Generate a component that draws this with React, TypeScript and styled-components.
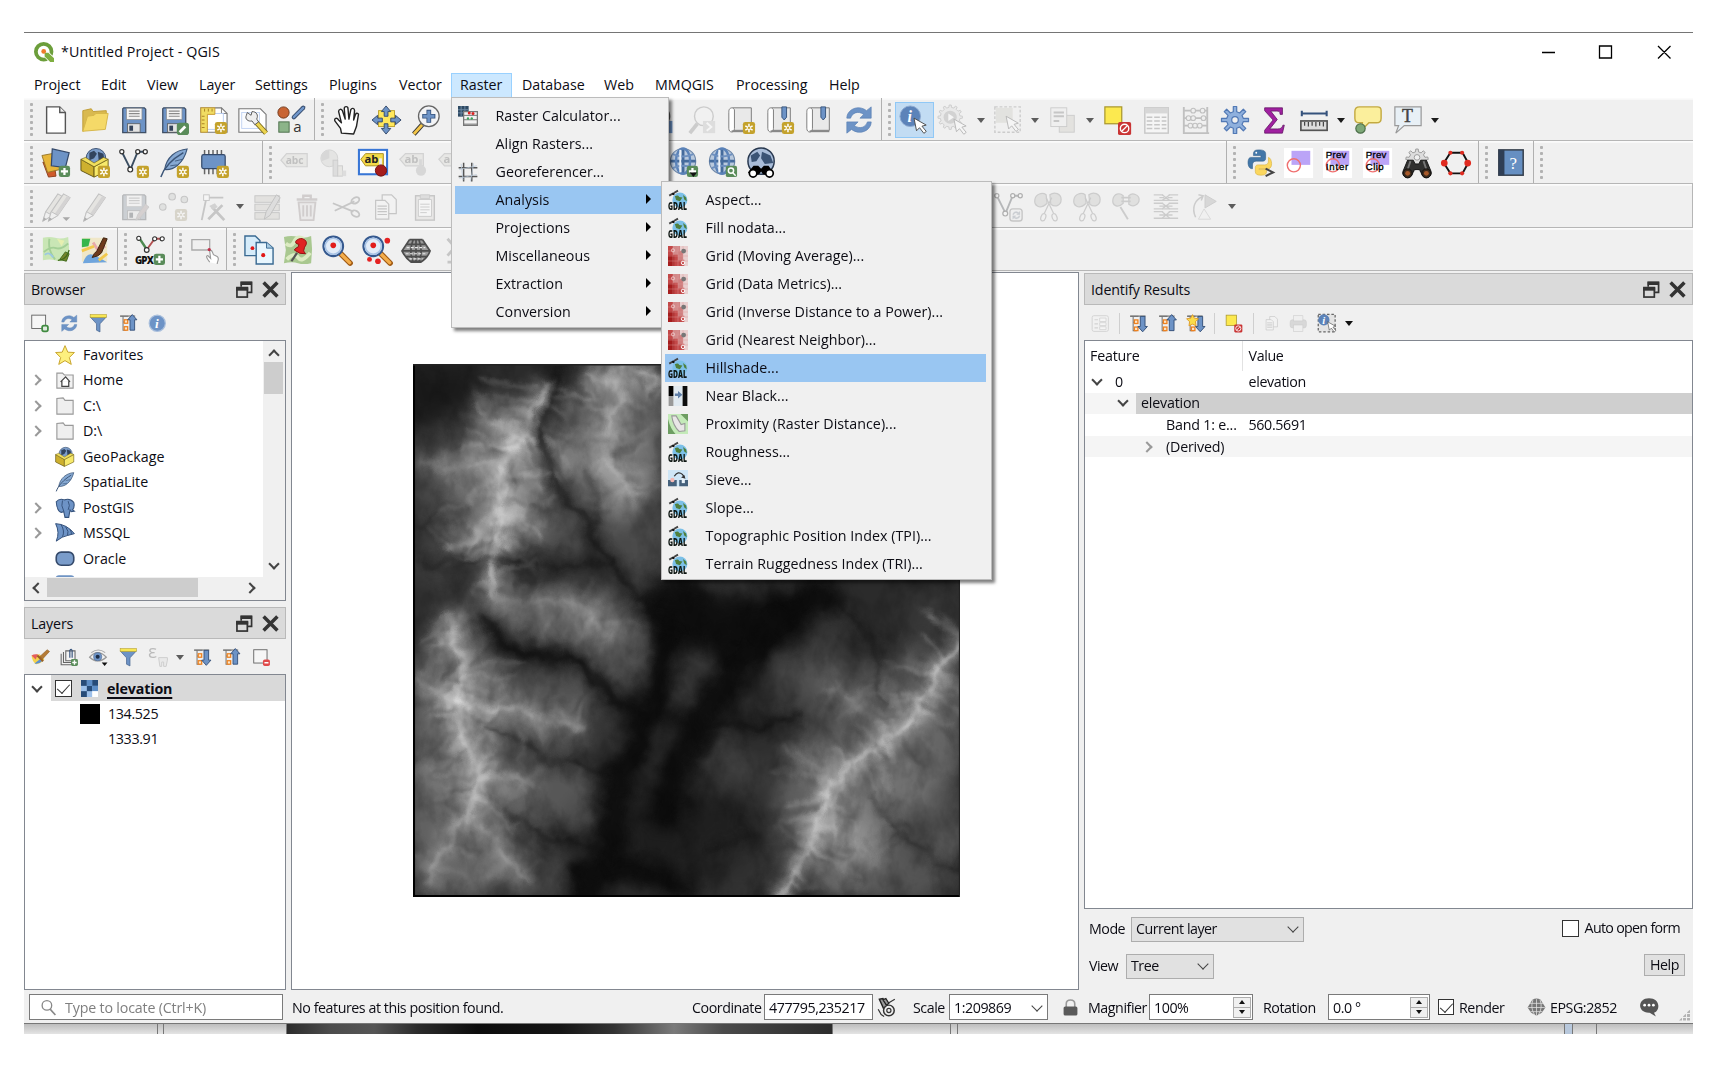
import React from 'react';
import styled, { createGlobalStyle, css } from 'styled-components';

const GlobalStyle = createGlobalStyle`
  * { box-sizing: border-box; }
  body { margin: 0; background: #fff; width: 1730px; height: 1076px; overflow: hidden; }
  #root { font-family: "Open Sans", "Noto Sans", sans-serif; font-size: 14.25px; color: #0c0c14; line-height: 20px; white-space: nowrap; }
`;

/* ---------- icon parts ---------- */

const BLUE = '#6d93c6';
const GOLD = '#c4a22c';
const GREEN = '#5a8c5a';

const StarBadge = ({ x = 18, y = 18 }) => (
  <g transform={`translate(${x} ${y})`}>
    <rect width="13" height="13" rx="2.5" fill={GOLD} />
    <path d="M6.5 2v9M2.6 4.2l7.8 4.6M10.4 4.2L2.6 8.8" stroke="#fff" strokeWidth="1.6" />
    <circle cx="6.5" cy="6.5" r="1.2" fill={GOLD} />
  </g>
);

const PlusBadge = ({ x = 19, y = 19 }) => (
  <g transform={`translate(${x} ${y})`}>
    <rect width="12" height="12" rx="2.5" fill={GREEN} />
    <path d="M6 2.2v7.6M2.2 6h7.6" stroke="#fff" strokeWidth="2.4" />
  </g>
);

const Floppy = () => (
  <>
    <path d="M5 3h22l1.5 1.5V29.500H4V4z" fill={BLUE} stroke="#3f4f66" strokeWidth="1.4" />
    <rect x="8" y="3.500" width="16.500" height="12" fill="#f4f4f4" stroke="#888" strokeWidth=".7" />
    <path d="M10.500 6.500h11.500M10.500 9.200h11.500M10.500 12h11.500" stroke="#8a8a8a" strokeWidth="1.300" />
    <rect x="9" y="20" width="13.500" height="9" fill="#e4e4e4" stroke="#555" strokeWidth=".8" />
    <rect x="11" y="22" width="4" height="5.500" fill="#34435a" />
  </>
);

const Cursor = ({ x = 17, y = 14 }) => (
  <path
    transform={`translate(${x} ${y})`}
    d="M0 0l2.700 13.500 3.200-3.300 4.600 6 2.600-2-4.600-5.600 4.500-1.200z"
    fill="#fff"
    stroke="#4a4a4a"
    strokeWidth="1"
  />
);

const Globe = () => (
  <>
    <circle cx="15" cy="14" r="13.500" fill="#b9c9dd" stroke="#6f88a8" strokeWidth="1.200" />
    <path d="M15 .5v27M1.500 14h27" stroke="#456b9c" strokeWidth="3" />
    <ellipse cx="15" cy="14" rx="7.500" ry="13.500" fill="none" stroke="#5a82b8" strokeWidth="2.600" />
    <path d="M4 6.500q11 5 22 0M4 21.500q11-5 22 0" fill="none" stroke="#6e90bf" strokeWidth="2" />
    <path d="M12 2v24" stroke="#eef3f9" strokeWidth="2" />
  </>
);

const Feather = () => (
  <>
    <path d="M30 1C18 2 8 10 6 23c9 1 20-6 24-22z" fill="#86a9d3" stroke="#3b5578" strokeWidth="1.200" />
    <path d="M2 31C5 22 14 12 26 5" stroke="#3b5578" strokeWidth="1.600" fill="none" />
    <path d="M12 19l7-1M17 14l8-2" stroke="#3b5578" strokeWidth=".9" fill="none" />
  </>
);

const Box = () => (
  <>
    <circle cx="17" cy="11" r="10.500" fill="#7c9dca" stroke="#374e6f" />
    <path d="M10 5l5-2 3 3-3 5-5 2zM19 4l6 2 1 7-6 1z" fill="#31435e" />
    <path d="M1 12l14 8v11L1 24z" fill="#ceb02e" stroke="#5e5212" />
    <path d="M15 20l15-8v12l-15 7z" fill="#f7e96b" stroke="#6e5f14" />
    <path d="M1 12l5-2 9 6 10-6 5 2-15 8z" fill="#f1df5d" stroke="#6e5f14" strokeWidth=".7" />
  </>
);

const VLine = () => (
  <>
    <path d="M3 4l9 18M13 21l7-17h8" fill="none" stroke="#3a4d61" strokeWidth="2" />
    <g fill="#fff" stroke="#333" strokeWidth="1.300">
      <circle cx="3" cy="4" r="2.200" /><circle cx="12" cy="23" r="2.600" /><circle cx="20" cy="4" r="2.200" /><circle cx="28" cy="4" r="2.200" />
    </g>
  </>
);

const Refresh = () => (
  <g fill={BLUE} stroke="#587fb2" strokeWidth=".7">
    <path d="M3 14C3 5 15-1 24 6l5-4v12H17l4-4c-6-4-12-2-14 4z" />
    <path d="M29 18c0 9-12 15-21 8l-5 4V18h12l-4 4c6 4 12 2 14-4z" />
  </g>
);

const TreeLines = () => (
  <>
    <path d="M2 4h14M7 4v24h6M7 14h6" stroke="#777" strokeWidth="1.800" fill="none" />
    <path d="M2 3.500h26" stroke="#777" strokeWidth="2" />
    <g fill="#fbe6c9" stroke="#ee8220" strokeWidth="2.200">
      <rect x="9" y="10" width="6" height="6" /><rect x="9" y="22" width="6" height="6" />
    </g>
  </>
);

const Pencil = ({ dx = 0 }) => (
  <g transform={`translate(${dx} 0)`}>
    <path d="M2 31l3-10L18 2l7 4-13 19z" fill="#d7cfae" stroke="#666" strokeWidth="1.100" />
    <path d="M5 21l7 4L25 6l-3-2-13 19z" fill="#a99" />
    <path d="M2 31l3-10 7 4z" fill="#eee" stroke="#666" strokeWidth="1" />
    <path d="M2 31l1-4 3 2z" fill="#333" />
  </g>
);

const Magnifier = () => (
  <>
    <path d="M20 20l10 10" stroke="#a05a14" strokeWidth="6" strokeLinecap="round" />
    <path d="M20 20l9.500 9.500" stroke="#f4ad4b" strokeWidth="3.600" strokeLinecap="round" />
    <circle cx="12" cy="12" r="10.500" fill="#e2ecf8" stroke="#35598f" strokeWidth="2.200" />
    <circle cx="12" cy="12" r="8.500" fill="none" stroke="#a8c3e6" strokeWidth="1.600" />
    <circle cx="12" cy="11" r="3" fill="#e11d1d" />
  </>
);

const Binoculars = () => (
  <>
    <path d="M6 13h6l2 4h4l2-4h6l5 12a5 5 0 0 1-10 3l-2-5h-6l-2 5a5 5 0 0 1-10-3z" fill="#30302f" stroke="#111" />
    <path d="M9 14l-3 9M23 14l3 9" stroke="#777" strokeWidth="2" />
    <circle cx="6" cy="27" r="4.800" fill="#3b2b1e" stroke="#111" /><circle cx="26" cy="27" r="4.800" fill="#3b2b1e" stroke="#111" />
    <circle cx="6" cy="27" r="2.600" fill="#a7592a" /><circle cx="26" cy="27" r="2.600" fill="#a7592a" />
  </>
);

const gearPath = (n: number, ro: number, ri: number) => {
  const pts: string[] = [];
  for (let i = 0; i < n; i++) {
    const step = (Math.PI * 2) / n;
    [[-0.26, ri], [-0.16, ro], [0.16, ro], [0.26, ri]].forEach(([f, r]) => {
      const a = i * step + f * step;
      pts.push(`${(16 + r * Math.sin(a)).toFixed(1)} ${(16 - r * Math.cos(a)).toFixed(1)}`);
    });
  }
  return `M${pts.join('L')}z`;
};

const Cutters = () => (
  <g stroke="#888" strokeWidth="1.300">
    <path d="M15 12C7 20 1 14 2 8S10 0 14 3z" fill="#bfc5bb" /><path d="M18 3c5-4 12-1 12 5s-6 9-11 5z" fill="#bfc5bb" />
    <path d="M14 6l8 17M20 6l-8 17" fill="none" />
    <ellipse cx="11" cy="27" rx="2.500" ry="4" fill="none" transform="rotate(20 11 27)" /><ellipse cx="23" cy="27" rx="2.500" ry="4" fill="none" transform="rotate(-20 23 27)" />
  </g>
);

const Squares = () => (
  <>
    <rect x="0" y="0" width="31" height="32" fill="#fff" />
    <rect x="8" y="3" width="20" height="15" fill="#bba4f7" />
    <circle cx="10.500" cy="18.500" r="7" fill="none" stroke="#f07070" strokeWidth="1.500" />
  </>
);

const PreviewText = ({ second, w }: { second: string; w: number }) => (
  <g fontFamily="Liberation Sans" fontSize="10.300" fill="#000" stroke="#000" strokeWidth=".35">
    <text x="3" y="10.500" textLength="22">Prev</text>
    <text x="3" y="23.500" textLength={w}>{second}</text>
  </g>
);

const ICONS: Record<string, React.ReactNode> = {
  newFile: <><path d="M6 2h14l6 6v22H6z" fill="#fff" stroke="#555" strokeWidth="1.500" /><path d="M20 2v6h6" fill="#eee" stroke="#555" strokeWidth="1.500" /></>,
  folder: <><path d="M3 28V6l9-2 2 3 14-1v6z" fill="#d9b94f" stroke="#c09c33" /><path d="M3 28L8 12l7-1 2-2h13l-3 17z" fill="#f5d968" stroke="#d5b548" /></>,
  save: <Floppy />,
  saveAs: <><Floppy /><rect x="19" y="19" width="13" height="13" rx="3" fill={GREEN} /><path d="M22 29l6-6" stroke="#fff" strokeWidth="3" /></>,
  newLayout: <><path d="M3 3h22l6 6v20H3z" fill="#fff" stroke="#777" strokeWidth="1.200" /><path d="M25 3v6h6" fill="none" stroke="#777" /><rect x="9" y="9" width="18" height="17" fill="none" stroke="#b8cdf2" /><path d="M3 3h15v7h-8v19H3z" fill="#f0dc63" stroke="#c99b33" /><path d="M7 4v3M11 4v3M15 4v3M4 12h3M4 16h3M4 20h3M4 24h3" stroke="#a87d22" /><StarBadge /></>,
  layoutMgr: <><path d="M2 4h23l6 6v19H2z" fill="#fff" stroke="#777" strokeWidth="1.200" /><rect x="5" y="8" width="19" height="17" fill="#fafcff" stroke="#c2d4f3" /><path d="M20 18l11 12" stroke="#7b6a1d" strokeWidth="5.500" /><path d="M21 19l10 11" stroke="#ecd44f" strokeWidth="3.500" /><path d="M11 8l4 3 1-4c5 0 7 4 5 8l2 3-4 3-3-4c-4 1-8-2-6-6z" fill="#eee" stroke="#555" /></>,
  style: <><circle cx="8" cy="8" r="6" fill="#c86433" stroke="#6e3518" /><path d="M19 13L29 3" stroke="#34496a" strokeWidth="4.500" strokeLinecap="round" /><path d="M19 13L29 3" stroke="#7197ca" strokeWidth="2.500" strokeLinecap="round" /><rect x="3" y="18" width="11" height="11" fill="#8cb489" stroke="#4a6d48" /><text x="18.500" y="29" fontSize="16" fill="#333">a</text></>,
  hand: <path d="M9 30l-1-5-6-8c-1-3 2-4 4-1l3 3-3-12c0-3 3-3 4-1l3 9-1-11c0-3 4-3 4 0l1 11 2-10c1-2 4-2 4 1l-1 10 2-6c1-2 4-1 3 1l-2 12-3 8z" fill="#fff" stroke="#222" strokeWidth="1.500" strokeLinejoin="round" />,
  pan: <><rect x="7" y="6" width="17" height="17" fill="#ffe75c" stroke="#bba02a" /><g fill={BLUE} stroke="#33496b"><path d="M15 1l5 6h-3v5h-4V7h-3zM15 31l5-6h-3v-5h-4v5h-3zM0 16l6-5v3h5v4H6v3zM31 16l-6-5v3h-5v4h5v3z" /></g></>,
  zoomIn: <><path d="M12 21L3 31" stroke="#333" strokeWidth="5" /><path d="M12 21L3 31" stroke="#f4c648" strokeWidth="3" /><circle cx="19" cy="12" r="11" fill="#f3f4f6" stroke="#666" strokeWidth="1.400" /><path d="M19 5v14M12 12h14" stroke="#35527c" strokeWidth="5" /><path d="M19 6v12M13 12h12" stroke={BLUE} strokeWidth="3.200" /></>,
  zoomLast: <><circle cx="12" cy="12" r="11" fill="#eee" stroke="#555" strokeWidth="1.600" /><rect x="13" y="17" width="13" height="13" fill={BLUE} /><path d="M22 20l-5 3.500 5 4" stroke="#fff" strokeWidth="2" fill="none" /></>,
  zoomNext: <><path d="M11 20L3 30" stroke="#888" strokeWidth="4" /><circle cx="18" cy="12" r="10" fill="#f4f4f4" stroke="#888" strokeWidth="1.500" /><rect x="17" y="17" width="13" height="13" fill="#bbb" /><path d="M21 19l5 4.500-5 4" stroke="#fff" strokeWidth="2" fill="none" /></>,
  mapView: <><path d="M7 3h20v24H7z" fill="#e9e9e9" stroke="#777" /><path d="M7 3c-4 0-4 3-4 5v17c0 5 6 5 6 0V5z" fill="#fff" stroke="#777" /><path d="M6 28h21" stroke="#888" strokeWidth="2" /><StarBadge x={18} y={18} /></>,
  bookmarkNew: <><path d="M7 3h20v24H7z" fill="#e9e9e9" stroke="#777" /><path d="M7 3c-4 0-4 3-4 5v17c0 5 6 5 6 0V5z" fill="#fff" stroke="#777" /><path d="M6 28h21" stroke="#888" strokeWidth="2" /><path d="M18 2h5v11l-2.500 3-2.500-3z" fill={BLUE} stroke="#35527c" /><StarBadge x={18} y={18} /></>,
  bookmarks: <><path d="M7 3h20v24H7z" fill="#e9e9e9" stroke="#777" /><path d="M7 3c-4 0-4 3-4 5v17c0 5 6 5 6 0V5z" fill="#fff" stroke="#777" /><path d="M6 28h21" stroke="#888" strokeWidth="2" /><path d="M18 2h5v11l-2.500 3-2.500-3z" fill={BLUE} stroke="#35527c" /></>,
  refresh: <Refresh />,
  identify: <><circle cx="12" cy="12" r="11" fill="#5c83b9" stroke="#8fabd0" /><text x="9" y="18" fontSize="17" fontStyle="italic" fontWeight="700" fontFamily="Liberation Serif" fill="#fff">i</text><Cursor x={16} y={14} /></>,
  action: <><path d={gearPath(12, 13, 10.5)} transform="translate(-3 -3)" fill="#ddd" stroke="#888" /><circle cx="13" cy="13" r="7" fill="#999" /><path d="M11 9l6 4-6 4z" fill="#fff" /><Cursor x={17} y={15} /></>,
  select: <><rect x="2" y="2" width="27" height="27" fill="none" stroke="#888" strokeWidth="1.500" strokeDasharray="3 2" /><rect x="3" y="3" width="18" height="16" fill="#cfc9a4" /><Cursor x={14} y={12} /></>,
  form: <><rect x="12" y="11" width="16" height="18" fill="#cfcba6" stroke="#888" /><rect x="3" y="3" width="17" height="20" fill="#eee" stroke="#888" /><path d="M6 8h11M6 12h11M6 17h6" stroke="#777" strokeWidth="2" /></>,
  deselect: <><rect x="2" y="2" width="18" height="18" fill="#fce94f" stroke="#a9972c" strokeWidth="1.300" /><rect x="16" y="18" width="14" height="14" rx="2" fill="#c93434" /><circle cx="23" cy="25" r="4.500" fill="none" stroke="#fff" strokeWidth="1.500" /><path d="M20 28l6-6" stroke="#fff" strokeWidth="1.500" /></>,
  table: <><rect x="3" y="3" width="25" height="27" fill="#fff" stroke="#777" strokeWidth="1.500" /><rect x="3" y="3" width="25" height="6" fill="#aaa" /><path d="M5 13h6M13 13h6M21 13h5M5 17h6M13 17h6M21 17h5M5 21h6M13 21h6M21 21h5M5 25h6M13 25h6M21 25h5" stroke="#777" strokeWidth="1.500" /></>,
  abacus: <><path d="M3 2v27M28 2v27M2 30h28M4 6h24M4 14h24M4 22h24" stroke="#666" strokeWidth="2" /><g fill="#eee" stroke="#666" strokeWidth="1.200">{[[13, 6], [23, 6], [8, 14], [13, 14], [24, 14], [10, 22], [15, 22], [20, 22]].map(([x, y]) => <circle key={`${x}-${y}`} cx={x} cy={y} r="2.500" />)}</g></>,
  gear: <><path d={gearPath(8, 14.5, 9)} fill="#8fb0dd" stroke="#5279b5" strokeWidth="1.300" strokeLinejoin="round" /><circle cx="16" cy="16" r="3.500" fill="#f0f0f0" stroke="#5279b5" strokeWidth="1.300" /></>,
  sigma: <path d="M6 3h19v7h-2.500c0-3-1-3.500-4-3.500h-6l7 9-8 10h8c4 0 5-1 6-4h1.500L25 30H6v-3l9-11L6 6z" fill="#a020a0" stroke="#5d1460" strokeWidth=".8" />,
  measure: <><path d="M3 9h27M3 6v6M29.500 6v6" stroke="#35527c" strokeWidth="2.200" /><rect x="2" y="17" width="28" height="10" fill="#ddd" stroke="#555" strokeWidth="1.800" /><path d="M6 18v4M10 18v5M14 18v4M18 18v5M22 18v4M26 18v5" stroke="#444" strokeWidth="1.300" /></>,
  tip: <><path d="M7 2h19q4 0 4 4v8q0 5-5 5h-8l-8 8 1-8H7q-5 0-5-5V7q0-5 5-5z" fill="#fbef9c" stroke="#c3a940" strokeWidth="1.500" /><circle cx="8" cy="25" r="5" fill="#7ea878" stroke="#4a6d48" strokeWidth="1.200" /></>,
  textNote: <><path d="M2 2h28v20H12l-9 8 3-8H2z" fill="#e8f0f6" stroke="#999" strokeWidth="1.300" /><text x="9.500" y="18" fontSize="19" fontFamily="Liberation Serif" stroke="#444" strokeWidth=".5" fill="#444">T</text></>,
  dataSource: <><path d="M2 15l12 2 2 13-8 1z" fill="#cf5b2b" stroke="#8d3d1b" /><path d="M1 8l16-3 3 18-13 3z" fill="#e7b63a" stroke="#967427" /><path d="M12 1l18 4-4 16-15-2z" fill={BLUE} stroke="#34496a" strokeWidth="1.300" /><PlusBadge x={19} y={19} /></>,
  geopackage: <><Box /><StarBadge x={19} y={19} /></>,
  box: <Box />,
  newShape: <><VLine /><StarBadge x={19} y={19} /></>,
  spatialite: <><Feather /><StarBadge x={19} y={19} /></>,
  feather: <Feather />,
  chip: <><path d="M7 2v26M11.500 2v26M16 2v26M20.500 2v26M25 2v26" stroke="#666" strokeWidth="1.600" /><rect x="4" y="7" width="25" height="15" rx="2" fill={BLUE} stroke="#34496a" strokeWidth="1.300" /><StarBadge x={20} y={19} /></>,
  abc: <><path d="M1 13l6-7h22v14H7z" fill="#dcd7bd" stroke="#999" strokeWidth="1.300" /><text x="6" y="17" fontSize="11" fontWeight="700" fill="#666">abc</text></>,
  diagram: <><circle cx="11" cy="11" r="9" fill="#ccd1bf" stroke="#999" /><path d="M11 11V2a9 9 0 0 0-8 12z" fill="#aaa" /><rect x="15" y="13" width="5" height="17" fill="#bbb" stroke="#888" /><rect x="20" y="19" width="5" height="11" fill="#dcd6b8" stroke="#888" /><rect x="25" y="24" width="4" height="6" fill="#bbb" /></>,
  pinLabelOn: <><rect x="1" y="2" width="30" height="26" fill="#fdfdfd" stroke="#3876d6" strokeWidth="2.200" /><path d="M3 12l5-6h19v13H8z" fill="#f4db48" stroke="#a98c1d" /><text x="7" y="16.500" fontSize="12" fontWeight="700" fill="#222">ab</text><path d="M24 11v10" stroke="#eee" strokeWidth="3" /><circle cx="24.500" cy="24" r="6" fill="#a51c1c" stroke="#6f1010" /></>,
  pinLabel: <><path d="M2 12l6-6h19v13H8z" fill="#dcd7bd" stroke="#999" strokeWidth="1.300" /><text x="7" y="16.500" fontSize="12" fontWeight="700" fill="#666">ab</text><path d="M24 12v10" stroke="#aaa" strokeWidth="3" /><circle cx="24.500" cy="24" r="5.500" fill="#aaa" /></>,
  globePlus: <><Globe /><PlusBadge x={19} y={19} /><path d="M22 26h8l-4 5z" fill="#111" /></>,
  globeSearch: <><Globe /><rect x="19" y="19" width="12" height="12" rx="2" fill={GREEN} /><circle cx="24.500" cy="24" r="2.800" fill="none" stroke="#fff" strokeWidth="1.600" /><path d="M26.500 26.500l3 3" stroke="#fff" strokeWidth="1.600" /></>,
  globeFind: <><circle cx="15" cy="14" r="14" fill="#a9bdd9" stroke="#28384f" strokeWidth="1.600" /><path d="M4 8l7-4 3 4-4 6-5 1zM16 4l9 4 3 8-9 1-4-6z" fill="#3b5475" /><path d="M7 19h5l3 3 3-3h5l5 7-4 4-7-2-2-3-2 3-7 2-5-4z" fill="#000" /><circle cx="6.500" cy="27" r="4" fill="#fff" stroke="#000" strokeWidth="1.800" /><circle cx="24" cy="27" r="4" fill="#fff" stroke="#000" strokeWidth="1.800" /></>,
  python: <><path d="M15 2c-6 0-6 2-6 6h8v2H6c-4 0-4 13 2 12v-4c0-3 2-4 4-4h7c2 0 3-1 3-3V6c0-3-3-4-7-4z" fill="#4377a8" stroke="#2e5d8a" strokeWidth=".6" /><path d="M17 29c6 0 6-2 6-6h-8v-1h10c5 0 4-11 0-12v4c0 3-2 4-4 4h-7c-2 0-3 1-3 3v4c0 3 2 4 6 4z" fill="#fbd75f" stroke="#d4ad38" strokeWidth=".6" /><circle cx="12" cy="5" r="1" fill="#fff" /><path d="M22 22l8 4-8 4" fill="none" stroke="#444" strokeWidth="2.200" /></>,
  shapes: <Squares />,
  prevInter: <><Squares /><PreviewText second="Inter" w={24} /></>,
  prevClip: <><Squares /><PreviewText second="Clip" w={19} /></>,
  binoculars: <><path d={gearPath(9, 12, 9)} transform="translate(0 -3)" fill="#ddd" stroke="#999" /><circle cx="16" cy="10" r="3" fill="#f0f0f0" stroke="#999" /><Binoculars /></>,
  hexagon: <><path d="M3 16l7-11h13l6 11-6 11H10z" fill="none" stroke="#111" strokeWidth="2" /><g fill="#e02b20"><circle cx="3.500" cy="16" r="3.600" /><circle cx="28.500" cy="16" r="3.600" /><circle cx="10" cy="5" r="2.200" /><circle cx="22.500" cy="5" r="2.200" /><circle cx="10" cy="27" r="2.200" /><circle cx="22.500" cy="27" r="2.200" /></g></>,
  helpBook: <><rect x="3" y="2" width="26" height="27" fill="#668fc2" stroke="#37404d" strokeWidth="1.600" /><rect x="3" y="2" width="6" height="27" fill="#2f3e55" /><text x="14.500" y="22" fontSize="18" fontFamily="Liberation Serif" fill="#fff">?</text></>,
  pencils: <><Pencil dx={0} /><Pencil dx={6} /><path d="M23 27h8l-4 4z" fill="#222" /></>,
  pencil: <Pencil dx={2} />,
  saveEdits: <><Floppy /><path d="M18 30l2-6 8-11 4 3-9 11z" fill="#c58a8a" stroke="#888" /></>,
  points: <><g fill="#bfc8bf" stroke="#777" strokeWidth="1.200"><circle cx="4" cy="16" r="3.500" /><circle cx="14" cy="5" r="3.500" /><circle cx="27" cy="8" r="3.500" /></g><StarBadge x={17} y={18} /></>,
  vertex: <><path d="M4 30L9 6h18" fill="none" stroke="#777" strokeWidth="2" /><rect x="6" y="3" width="6" height="6" fill="#fff" stroke="#777" /><path d="M11 29l15-15M15 16l13 14" stroke="#777" strokeWidth="3" /><path d="M12 15l6-3 3 4-5 3z" fill="#999" /></>,
  editTable: <><g fill="#ccc8a8" stroke="#777"><rect x="2" y="4" width="26" height="7" /><rect x="2" y="13" width="26" height="7" /><rect x="2" y="22" width="26" height="7" /></g><path d="M12 29l2-8L25 3l4 3-11 19z" fill="#bbb" stroke="#666" /></>,
  trash: <><path d="M7 11h18l-2 19H9z" fill="#e8dada" stroke="#a88" strokeWidth="2" /><path d="M5 8h22M12 8V4h8v4" fill="none" stroke="#a88" strokeWidth="2.500" /><path d="M12 14v12M16 14v12M20 14v12" stroke="#a88" strokeWidth="2" /></>,
  scissors: <g fill="none" stroke="#777" strokeWidth="2"><path d="M2 12l22 9M4 20l21-10" /><ellipse cx="26" cy="9" rx="4.500" ry="3" transform="rotate(-30 26 9)" /><ellipse cx="26" cy="23" rx="4.500" ry="3" transform="rotate(30 26 23)" /></g>,
  copy: <g fill="#f6f6f6" stroke="#777" strokeWidth="1.300"><path d="M13 3h10l5 5v15H13z" /><path d="M6 9h10l4 4v16H6z" /><path d="M8 15h10M8 18h10M8 21h10M8 24h10" /></g>,
  paste: <><rect x="7" y="4" width="20" height="26" fill="#ddd8cc" stroke="#777" strokeWidth="1.500" /><path d="M10 8h14v18H10z" fill="#fff" stroke="#888" /><path d="M12 3h10v4H12zM12 13h10M12 16h10M12 19h10M12 22h7" fill="#bbb" stroke="#888" /></>,
  vRefresh: <><VLine /><rect x="17" y="18" width="13" height="13" rx="3" fill="#eee" stroke="#777" strokeWidth="1.500" /><g transform="translate(19 20) scale(.3)"><Refresh /></g></>,
  cutters: <Cutters />,
  merge: <g stroke="#888" strokeWidth="1.300"><path d="M13 12C7 18 1 14 2 8S9 0 13 4z" fill="#bfc5bb" /><path d="M19 4c4-4 11-1 11 4s-6 9-11 5z" fill="#bfc5bb" /><path d="M11 6h10M11 10h10M10 16l8 13" fill="none" strokeWidth="2" /></g>,
  align: <g stroke="#888" strokeWidth="1.400" fill="none"><path d="M4 3h10M20 3h10M4 9h26M4 12h10M20 12h10M4 18h26M4 21h10M20 21h10M4 28h26" /><path d="M10 6h5M19 6h5M13 3l4 3-4 3M21 3l-4 3 4 3M10 15h14M10 24.500h14M13 12l4 3-4 3M21 12l-4 3 4 3M13 21l4 3.500-4 3.500M21 21l-4 3.500 4 3.500" /></g>,
  rotate: <><path d="M6 27C1 16 6 8 13 5M9 3l5 1-2 5" fill="none" stroke="#888" strokeWidth="1.600" /><path d="M16 3l12 7-12 7z" fill="#aaa" stroke="#888" /><path d="M9 29l6-11 7 11z" fill="none" stroke="#aaa" /></>,
  osm: <><path d="M2 3q7-2 13 0t14-1l1 12-2 13q-7 2-13 0T2 27L2 16z" fill="#c9e6b5" /><path d="M3 18q8-6 13-4t13-5M9 4q-2 12 6 22" stroke="#a3cf96" strokeWidth="2" fill="none" /><path d="M17 4l8 2-3 6z" fill="#e6efb0" /><path d="M4 21q5-4 9 3" stroke="#9cc8e2" strokeWidth="2" fill="none" /><path d="M20 26l6-8 4 2-3 8z" fill="#76852c" stroke="#3f6a1d" /><path d="M18 27q9 0 12-11" stroke="#3f6a1d" strokeWidth="1.300" fill="none" /></>,
  osmEdit: <><rect x="2" y="3" width="27" height="26" rx="2" fill="#f0e7c8" /><path d="M2 4h9l-2 8-7 1z" fill="#35b54b" /><path d="M3 30q4-12 11-9t15 8z" fill="#6fa5dd" /><path d="M14 8l5 8 8-4" stroke="#e7a9a9" strokeWidth="3" fill="none" /><path d="M2 17l13-5M20 27l9-7" stroke="#f2c84c" strokeWidth="3" /><path d="M13 24q2-5 5-7l7-14 4 1-6 15q-3 4-10 5z" fill="#6e3a1c" stroke="#39200f" /></>,
  gpx: <><path d="M5 4l8 12" stroke="#4d8a50" strokeWidth="2.500" /><path d="M13 15l8-11h8" stroke="#b35050" strokeWidth="2" fill="none" /><g fill="#fff" stroke="#333" strokeWidth="1.200"><circle cx="4" cy="3.500" r="2.200" /><circle cx="12.500" cy="16" r="2.500" /><circle cx="21" cy="4" r="2.200" /><circle cx="29" cy="4" r="2.200" /></g><text x="0" y="30.500" fontSize="10.500" fontWeight="800" fill="#111" textLength="20">GPX</text><PlusBadge x={20} y={20} /></>,
  rectHand: <><path d="M2 5h19v11H2z" fill="none" stroke="#aaa" strokeWidth="1.400" /><path d="M21 29c-4-5-4-7-2-7l3 3-1-8c2-2 3 1 4 4l4 2c3 2 0 5 0 8" fill="#fff" stroke="#999" strokeWidth="1.200" /><circle cx="20.500" cy="15.500" r="1.700" fill="#c0304a" /></>,
  docs: <><path d="M1 1h11l5 5v16H1z" fill="#d6ecfa" stroke="#3a6a92" strokeWidth="1.500" /><path d="M13 8h11l7 6v17H13z" fill="#e8f6fe" stroke="#3a6a92" strokeWidth="1.500" /><path d="M24 8v6h7" fill="#a7cbe3" stroke="#3a6a92" /><circle cx="9" cy="14" r="2" fill="#e01818" /><circle cx="20.500" cy="21.500" r="2.200" fill="#e01818" /></>,
  pin: <><path d="M1 2q8-2 15 0t14-1l1 14-1 15q-8 2-14 0T1 30l2-14z" fill="#a9c890" /><path d="M3 9q6 5 9-2t10-3M4 26q8-8 12-2t13-5" stroke="#dcebc2" strokeWidth="4" fill="none" /><path d="M9 28l6-9" stroke="#555" strokeWidth="2.400" /><path d="M14 6q5-4 9-1t0 8l-1 4 2 3q-6 1-12-4 2-3 4-3l1-3q-5-1-3-4z" fill="#e02222" stroke="#931010" /></>,
  mag: <Magnifier />,
  magDots: <><Magnifier /><g fill="#e52222"><circle cx="27" cy="6" r="3" /><circle cx="8" cy="26" r="2.600" /><circle cx="17" cy="28" r="3" /></g></>,
  meshGlobe: <><path d="M9 5h14l8 12q-4 9-11 12h-8Q5 26 1 17z" fill="#999" /><g fill="none" stroke="#4d4d4d" strokeWidth="1.800"><path d="M9 5h14M6 10h20M1 17h30M5 23h22M10 28h12M9 5L1 17q4 8 10 12h10q7-4 10-12L23 5M13 5q-5 12 0 24M19 5q5 12 0 24M16 5v24" /></g><path d="M6 13.500h20M5 20h22M9 25.500h14" stroke="#e8e8e8" strokeWidth="1.300" strokeDasharray="3 1.500" /></>,
  cross: <path d="M8 4l16 18M24 4L8 22M8 29h8" stroke="#777" strokeWidth="3" />,
  newRect: <><rect x="3" y="2" width="24" height="23" fill="#f6f6f6" stroke="#666" strokeWidth="1.600" /><rect x="21" y="20" width="10" height="10" rx="3" fill="#dfeadf" stroke="#3f8a3f" strokeWidth="3" /></>,
  filter: <><path d="M2 5h28L19 17v14l-6-3V17z" fill={BLUE} stroke="#44628c" strokeWidth="1.200" /><rect x="2" y="1" width="28" height="5" fill="#f7e653" stroke="#b79f2d" /></>,
  collapse: <><TreeLines /><path d="M23 1l8 9h-4v18h-8V10h-4z" fill={BLUE} stroke="#2f4a73" strokeWidth="1.500" /></>,
  expand: <><TreeLines /><path d="M23 30l8-9h-4V4h-8v17h-4z" fill={BLUE} stroke="#2f4a73" strokeWidth="1.500" /></>,
  expandNew: <><TreeLines /><path d="M24 30l8-9h-4V4h-8v17h-4z" fill={BLUE} stroke="#2f4a73" strokeWidth="1.500" /><path d="M11 1l3 6 7 1-5 5 1 7-6-3-6 3 1-7-5-5 7-1z" fill="#fbdc4a" stroke="#dd9a28" strokeWidth="1.500" /></>,
  info: <><circle cx="16" cy="16" r="14" fill={BLUE} stroke="#a9bfdc" strokeWidth="2" /><text x="12" y="24" fontSize="23" fontStyle="italic" fontWeight="700" fontFamily="Liberation Serif" fill="#fff">i</text></>,
  star: <path d="M16 1l4.500 10.500L31 12l-8 8 3 11-10-6-10 6 3-11-8-8 10.500-.5z" fill="#fdf07e" stroke="#c9a52e" strokeWidth="1.600" />,
  home: <><path d="M3 5h9l3 3h14v21H3z" fill="#f2f2f2" stroke="#999" strokeWidth="1.800" /><path d="M9 19l8-8 7 8M11 18v8h11v-8" fill="#fff" stroke="#444" strokeWidth="2" /></>,
  dir: <path d="M3 29V4l10-1 3 4h13v22z" fill="#efefef" stroke="#999" strokeWidth="1.800" />,
  elephant: <><path d="M2 6q5-6 13-3 9-3 15 4 2 7-2 12l3 2-5 1-2-3-2 12h-6l-2-9-4 1Q3 21 2 6z" fill={BLUE} stroke="#35527c" strokeWidth="1.700" /><path d="M12 4q-3 8 2 17M21 5q4 7 0 14" fill="none" stroke="#35527c" strokeWidth="1.500" /></>,
  mssql: <path d="M1 1q18 1 30 16l-11 3q-8 1-18 9 6-14-1-28zM10 3q6 10 2 19M17 6q6 8 3 14M24 10q3 5 2 8" fill={BLUE} stroke="#35527c" strokeWidth="1.600" />,
  oracle: <rect x="2" y="5" width="28" height="21" rx="8" fill="#7a9cca" stroke="#34496a" strokeWidth="2.600" />,
  oracleTop: <rect x="1" y="2" width="30" height="20" rx="5" fill="#6f94c4" />,
  brush: <><path d="M1 13l14-2 8 9q-7 8-14 8-7-4-8-15z" fill="#f4d24c" /><path d="M1 13q4-3 11-2l-4 9z" fill="#e55c5c" /><path d="M6 27q7 2 14-5l-4-3z" fill="#5b8fd0" /><path d="M15 15L28 3l4 3-12 13z" fill="#b57b35" stroke="#8b5a22" /><path d="M11 13l10 10" stroke="#9b5e24" strokeWidth="3.500" /></>,
  groupAdd: <><g fill="#f3f3f3" stroke="#666" strokeWidth="1.800"><path d="M2 10v19h18M6 7v18h18" fill="none" /><path d="M10 5h16v17H10z" /></g><path d="M17 17V4q3-4 4 1v12" stroke="#35527c" fill="none" strokeWidth="2" /><PlusBadge x={19} y={19} /></>,
  eye: <><path d="M1 16q14-16 29 0-15 13-29 0z" fill="#f2f2f2" stroke="#999" strokeWidth="2" /><path d="M4 8q12-9 24 0" stroke="#aaa" strokeWidth="2" fill="none" /><circle cx="15" cy="15" r="7" fill={BLUE} stroke="#44628c" /><circle cx="15" cy="15" r="3.500" fill="#1c2c45" /><path d="M22 25h10l-5 6z" fill="#111" /></>,
  epsilon: <><text x="0" y="18" fontSize="30" fill="#555">ε</text><path d="M17 17h14v4l-2 10h-4v-7h-3v7h-3z" fill="#ddd" stroke="#888" strokeWidth="1.500" /></>,
  removeLayer: <><rect x="3" y="3" width="23" height="23" fill="#f6f6f6" stroke="#666" strokeWidth="1.600" /><rect x="19" y="20" width="12" height="11" rx="3" fill="#e04a4a" /><path d="M21.500 25.500h7" stroke="#fff" strokeWidth="2.600" /></>,
  raster: <><rect width="32" height="32" fill="#9dc0ea" /><g fill="#274b78"><rect x="0" y="0" width="11" height="11" /><rect x="11" y="11" width="10" height="10" /><rect x="21" y="0" width="11" height="11" /><rect x="0" y="21" width="11" height="11" /></g><g fill="#5d8dc6"><rect x="11" y="0" width="10" height="11" /><rect x="21" y="11" width="11" height="10" /></g><rect x="21" y="21" width="11" height="11" fill="#fff" /></>,
  formView: <><rect x="2" y="3" width="28" height="27" rx="3" fill="#f4f4f4" stroke="#999" strokeWidth="1.600" /><path d="M6 10h6M6 17h6M6 24h6" stroke="#999" strokeWidth="2" /><path d="M15 7h11v6H15zM15 15h11v5H15zM15 22h11v5H15z" fill="#fff" stroke="#999" strokeWidth="1.400" /></>,
  print: <><rect x="2" y="10" width="28" height="14" rx="4" fill="#aaa" stroke="#888" /><rect x="8" y="3" width="16" height="9" fill="#eee" stroke="#888" /><rect x="8" y="19" width="16" height="11" fill="#eee" stroke="#888" /></>,
  identifySelect: <><rect x="2" y="2" width="27" height="28" fill="#e4e4e4" stroke="#666" strokeWidth="2" strokeDasharray="4 3" /><circle cx="11" cy="11" r="9" fill="#5c83b9" /><text x="8.500" y="17" fontSize="17" fontStyle="italic" fontWeight="700" fontFamily="Liberation Serif" fill="#fff">i</text><Cursor x={17} y={14} /></>,
  rasterCalc: <><rect x="0" y="0" width="17" height="17" fill="#2e4a63" /><path d="M5 0v17M11 0v17M0 6h17M0 11h17" stroke="#6f8ca6" strokeWidth="1.500" /><rect x="9" y="9" width="22" height="22" fill="#f2f2f2" stroke="#777" strokeWidth="2" /><path d="M9 15h22M9 22h22M9 29h22" stroke="#777" strokeWidth="1.600" /><g fill="#d22"><circle cx="18" cy="11" r="2.400" /><circle cx="24" cy="12" r="2.400" /></g><g fill="#3ba45a"><circle cx="16" cy="20" r="1.900" /><circle cx="22" cy="20" r="1.900" /></g></>,
  georef: <><path d="M9 1v30M22 1v30M1 9h30M1 23h30" stroke="#555" strokeWidth="2.400" /><path d="M5 3l3 26M25 2l-5 29M2 12l28-6M2 26l28-6" stroke="#b9c8d8" strokeWidth="1.200" /></>,
  gdal: <><circle cx="19" cy="16" r="12" fill="#7cc0e8" /><path d="M11 10q5-3 7 1l5 1-4 6-6-2zM24 8l5 4 1 6-4-3z" fill="#4f7f3c" /><path d="M2 9l5-3M10 4.500l6-3.500" stroke="#444" strokeWidth="3" /><circle cx="8.500" cy="6" r="2.200" fill="#111" /><g transform="translate(0 31.500) scale(.66 1)"><text x="0" y="0" fontSize="16.500" fontWeight="800" fontFamily="Open Sans" fill="#0c1410">GDAL</text></g></>,
  grid: <><rect width="32" height="32" fill="#c24848" /><path d="M19 0h13v32h-6V22h-7z" fill="#e9cfcf" /><path d="M8 0h11v14H8z" fill="#d38a8a" /><rect y="15" width="10" height="17" fill="#a51d1d" /><rect x="16" y="8" width="8" height="15" fill="#cf7f7f" /><path d="M8 0v32M16 0v32M24 0v32M0 8h32M0 16h32M0 24h32" stroke="#dd9a9a" strokeWidth=".7" /><circle cx="25" cy="8" r="3.800" fill="#777" /><circle cx="8" cy="7" r="2.500" fill="none" stroke="#f0d6d6" strokeWidth="1.300" /><circle cx="24" cy="27" r="2.800" fill="none" stroke="#fff" strokeWidth="1.500" /></>,
  nearBlack: <><rect x="1" y="0" width="8" height="16" fill="#000" /><rect x="1" y="16" width="8" height="16" fill="#999" /><rect x="23" y="0" width="8" height="32" fill="#0d0d0d" /><rect x="9" y="0" width="14" height="32" fill="#e0e9f0" /><path d="M11 12h5V8l7 6-7 6v-4h-5z" fill="#5f7fa8" /></>,
  proximity: <><rect width="32" height="32" fill="#c4eab9" /><path d="M0 8q4 16 12 24H0zM32 0v12L20 0z" fill="#6d9d62" /><path d="M6 3h7l8 14 6-2v12l-9 1q-10-9-12-25z" fill="#e8e6e6" stroke="#999" strokeWidth="1.700" /></>,
  sieve: <><rect width="32" height="26" fill="#cfe6f6" /><rect y="16" width="14" height="10" fill="#45617c" /><rect x="18" y="16" width="14" height="10" fill="#45617c" /><rect x="22" y="13" width="5" height="8" fill="#e8f2fa" /><circle cx="7" cy="16" r="3.500" fill="#f4b9b5" /><path d="M10 10q6-9 13-3l3 4" fill="none" stroke="#333" strokeWidth="2" /><path d="M28 14l-7-2 5-4z" fill="#333" /></>,
  gps: <><path d="M4 2l6-1 8 14-5 7z" fill="#999" stroke="#222" strokeWidth="2.400" /><path d="M15 1l5 8-4 3-6-9z" fill="#999" stroke="#222" strokeWidth="2" /><path d="M20 8l10-6M2 19l5 9 5 3" stroke="#333" strokeWidth="2" fill="none" /><circle cx="20" cy="21" r="9" fill="#eee" stroke="#333" strokeWidth="2.500" /><circle cx="20" cy="21" r="3.500" fill="none" stroke="#333" strokeWidth="2" /></>,
  lock: <><path d="M8 16V9q0-7 8-7t8 7v7" fill="none" stroke="#999" strokeWidth="3" /><rect x="3" y="14" width="26" height="17" rx="3" fill="#5a5a5a" /></>,
  crs: <><path d="M9 3q7-4 14 0l8 13-6 9-9 5-9-5-6-9z" fill="#777" /><path d="M2 16h28M5 9h22M6 23h20M16 2v28M10 3q-5 13 3 26M22 3q5 13-3 26" stroke="#e3e3e3" strokeWidth="1.300" fill="none" /></>,
  chat: <><path d="M16 2c19 0 18 21 8 23l3 6-10-6C-3 26-3 2 16 2z" fill="#555" /><g fill="#fff"><circle cx="9" cy="13" r="2.200" /><circle cx="16" cy="13" r="2.200" /><circle cx="23" cy="13" r="2.200" /></g></>,
  search: <><circle cx="13" cy="12" r="9" fill="none" stroke="#888" strokeWidth="2.500" /><path d="M19 19l10 11" stroke="#888" strokeWidth="3" /></>,
  logo: <><circle cx="15.500" cy="15.500" r="12.500" fill="none" stroke="#6c9e3b" strokeWidth="6" /><path d="M17 17l14 14" stroke="#fff" strokeWidth="11" /><path d="M17 17h6l9 9v6h-6l-9-9z" fill="#7fae40" /><circle cx="15.500" cy="15" r="3.800" fill="#ee7c2b" /></>,
};

const Svg = styled.svg<{ $s: number; $off?: boolean }>`
  width: ${p => p.$s}px;
  height: ${p => p.$s}px;
  flex: none;
  display: block;
  overflow: visible;
  ${p => p.$off && css`opacity: 0.34; filter: grayscale(0.75);`}
`;

const Icon = ({ name, size = 30, off }: { name: string; size?: number; off?: boolean }) => (
  <Svg viewBox="0 0 32 32" $s={size} $off={off}>{ICONS[name]}</Svg>
);

const Chevron = styled.span<{ $dir: 'right' | 'down' | 'up' | 'left'; $c?: string; $s?: number; $w?: number }>`
  flex: none;
  width: ${p => p.$s ?? 8}px;
  height: ${p => p.$s ?? 8}px;
  border: solid ${p => p.$c ?? '#444'};
  border-width: 0 ${p => p.$w ?? 2.4}px ${p => p.$w ?? 2.4}px 0;
  transform: ${p => ({ right: 'translateX(-1px) rotate(-45deg)', down: 'translateY(-2px) rotate(45deg)', up: 'translateY(2px) rotate(225deg)', left: 'translateX(2px) rotate(135deg)' }[p.$dir])};
`;

/* ---------- window frame ---------- */

const Desktop = styled.div`
  padding: 32px 37px 0 24px;
  width: 1730px;
`;

const Window = styled.div`
  position: relative;
  height: 992px;
  display: flex;
  flex-direction: column;
  background: #f0f0f0;
  border-top: 1px solid #757575;
  border-bottom: 1px solid #777;
`;

const TitleBar = styled.div`
  height: 40px;
  display: flex;
  align-items: center;
  padding: 0 22px 2px 10px;
  background: #fff;
`;

const Title = styled.span`
  margin-left: 7px;
  flex: 1;
  letter-spacing: 0.1px;
`;

const WindowControls = styled.svg`
  width: 130px;
  height: 14px;
`;

const MenuBar = styled.div`
  height: 25px;
  display: flex;
  background: #fff;
`;

const MenuBarItem = styled.div<{ $w: number; $active?: boolean }>`
  width: ${p => p.$w}px;
  padding: 2px 0 0 10px;
  ${p => p.$active && css`background: #cce8ff; box-shadow: inset 0 0 0 1px #99d1ff; padding-left: 9px;`}
`;

/* ---------- toolbars ---------- */

const ToolRow = styled.div<{ $h: number; $edge?: boolean }>`
  height: ${p => p.$h}px;
  display: flex;
  border-bottom: 1px solid #b6b6b6;
  box-shadow: inset 0 1px #fbfbfb, inset 0 2px #f8f8f8;
  ${p => p.$edge && css`border-right: 1px solid #b6b6b6;`}
`;

const ToolGroup = styled.div<{ $w?: number; $open?: boolean }>`
  width: ${p => (p.$w ? `${p.$w}px` : 'auto')};
  flex: none;
  display: flex;
  align-items: center;
  padding-top: 2px;
  border-right: ${p => (p.$open ? 0 : 1)}px solid #b0b0b0;
`;

const Handle = styled.span`
  flex: none;
  width: 3px;
  height: 34px;
  margin: 0 4px 0 5.5px;
  background: radial-gradient(circle at 1.5px 1.5px, #b2b2b2 1.3px, transparent 1.8px) 0 0 / 3px 6px;
`;

const ToolButton = styled.div<{ $on?: boolean }>`
  flex: none;
  width: 39.2px;
  height: 36px;
  display: flex;
  align-items: center;
  justify-content: center;
  ${p => p.$on && css`background: #c2dcf3; box-shadow: inset 0 0 0 1px #90c8f6;`}
`;

const Drop = styled.span<{ $c?: string; $w?: number }>`
  flex: none;
  width: ${p => p.$w ?? 15.6}px;
  display: flex;
  justify-content: center;
  &::after { content: ''; border: 4.5px solid transparent; border-top: 5px solid ${p => p.$c ?? '#5c5c5c'}; border-bottom: 0; }
`;

const Gap = styled.span<{ $w: number }>`
  flex: none;
  width: ${p => p.$w}px;
`;

/* "-" marks a disabled tool, "v" a dropdown arrow, "V" a dark one, a number an empty stretch */
const Tools = ({ list, active }: { list: (string | number)[]; active?: string }) => (
  <>
    {list.map((t, i) => {
      if (typeof t === 'number') return <Gap key={i} $w={t} />;
      if (t === 'v' || t === 'V') return <Drop key={i} $c={t === 'V' ? '#1b1b1b' : undefined} />;
      const off = t[0] === '-';
      const name = off ? t.slice(1) : t;
      return <ToolButton key={i} $on={name === active}><Icon name={name} off={off} /></ToolButton>;
    })}
  </>
);

/* ---------- docks ---------- */

const Workspace = styled.div`
  flex: 1;
  display: flex;
  padding-top: 1px;
`;

const LeftDock = styled.div`
  width: 262px;
  display: flex;
  flex-direction: column;
  padding-top: 1px;
`;

const MapCanvas = styled.div`
  width: 788px;
  margin: 0 5px;
  height: 718px;
  background: #fff;
  border: 1px solid #828790;
  padding: 91px 0 0 121px;
`;

const RightDock = styled.div`
  flex: 1;
  display: flex;
  flex-direction: column;
  padding-top: 1px;
`;

const DockHeader = styled.div`
  height: 32px;
  flex: none;
  display: flex;
  align-items: center;
  padding: 0 6px 0 6px;
  gap: 9px;
  background: #dadada;
  border: 1px solid #b9b9b9;
`;

const DockTitle = styled.span`
  flex: 1;
  padding-top: 2px;
  letter-spacing: -0.15px;
`;

const DockTools = styled.div<{ $gap: number; $pad?: number }>`
  height: 35px;
  flex: none;
  display: flex;
  align-items: center;
  gap: ${p => p.$gap}px;
  padding: 1px 0 0 ${p => p.$pad ?? 6}px;
`;

const Divider = styled.span`
  width: 1px;
  height: 21px;
  background: #cfcfcf;
`;

const Frame = styled.div<{ $h: number }>`
  height: ${p => p.$h}px;
  flex: none;
  background: #fff;
  border: 1px solid #828790;
`;

const BrowserFrame = styled(Frame)`
  display: grid;
  grid-template: 236px 1fr / 1fr 22px;
  margin-bottom: 6px;
`;

const TreeList = styled.div`
  overflow: hidden;
  padding-top: 1px;
`;

const TreeRow = styled.div`
  height: 25.5px;
  display: flex;
  align-items: center;
  padding-left: 8px;
`;

const Twist = styled.span`
  width: 22px;
  flex: none;
  display: flex;
`;

const TreeText = styled.span`
  margin-left: 8px;
`;

const VScroll = styled.div`
  display: flex;
  flex-direction: column;
  align-items: center;
  background: #f0f0f0;
  padding: 8px 1px 7px 0;
`;

const VThumb = styled.div`
  width: 19px;
  height: 32px;
  margin: 5px 0 auto;
  background: #cdcdcd;
`;

const HScroll = styled.div`
  grid-column: 1 / 3;
  display: flex;
  align-items: center;
  background: #f0f0f0;
  padding: 0 30px 2px 7px;
`;

const HThumb = styled.div`
  width: 151px;
  height: 19px;
  margin: 0 auto 0 7px;
  background: #cdcdcd;
`;

const LayerRow = styled.div`
  height: 26px;
  display: flex;
  align-items: center;
  background: linear-gradient(90deg, #fff 26px, #d9d9d9 26px);
  padding: 1px 0 0 8px;
  font-weight: 700;
`;

const LayerName = styled.span`
  margin-left: 9px;
  text-decoration: underline;
  text-decoration-thickness: 1.5px;
  text-underline-offset: 3px;
  letter-spacing: -0.15px;
`;

const LegendRow = styled.div`
  height: 25.4px;
  display: flex;
  align-items: center;
  padding-left: 55px;
  gap: 8px;
  letter-spacing: -0.35px;
`;

const Swatch = styled.span<{ $c: string }>`
  width: 20px;
  height: 20px;
  background: ${p => p.$c};
`;

const CheckBox = styled.span<{ $s: number; $checked?: boolean }>`
  flex: none;
  width: ${p => p.$s}px;
  height: ${p => p.$s}px;
  background: #fff;
  border: 1px solid #333;
  display: flex;
  justify-content: center;
  &::after {
    content: '';
    display: ${p => (p.$checked ? 'block' : 'none')};
    width: 5.5px;
    height: 11px;
    border: solid #333;
    border-width: 0 1.5px 1.5px 0;
    transform: rotate(42deg);
  }
`;

const ResultHead = styled.div`
  height: 30px;
  display: flex;
  align-items: center;
`;

const FeatureCell = styled.div<{ $pad: number }>`
  width: 158px;
  padding-left: ${p => p.$pad}px;
  display: flex;
  align-items: center;
  letter-spacing: -0.2px;
`;

const HeadCell = styled(FeatureCell)`
  height: 30px;
  border-right: 1px solid #e2e2e2;
`;

const ValueCell = styled.span`
  padding-left: 5.5px;
  letter-spacing: -0.35px;
`;

const ResultRow = styled.div<{ $bg?: string; $from?: number }>`
  height: 21.6px;
  display: flex;
  align-items: center;
  ${p => p.$bg && css`background: linear-gradient(90deg, #f5f5f5 ${p.$from ?? 0}px, ${p.$bg} ${p.$from ?? 0}px);`}
`;

const OptionRow = styled.div<{ $top: number }>`
  display: flex;
  align-items: center;
  padding: 0 8px 0 5px;
  height: 26px;
  margin-top: ${p => p.$top}px;
  letter-spacing: -0.5px;
`;

const OptionLabel = styled.span<{ $w: number }>`
  flex: none;
  width: ${p => p.$w}px;
`;

const Select = styled.div<{ $w: number }>`
  width: ${p => p.$w}px;
  height: 25px;
  display: flex;
  align-items: center;
  justify-content: space-between;
  padding: 0 6px 0 4px;
  background: #e1e1e1;
  border: 1px solid #adadad;
`;

const HelpButton = styled.div`
  margin-left: auto;
  margin-top: -2px;
  width: 41px;
  height: 22px;
  line-height: 20px;
  text-align: center;
  background: #e1e1e1;
  border: 1px solid #adadad;
`;

const Auto = styled.div`
  margin-left: auto;
  margin-top: -2px;
  display: flex;
  align-items: center;
  gap: 6px;
  padding-right: 5px;
  letter-spacing: -0.7px;
`;

/* ---------- status bar ---------- */

const StatusBar = styled.div`
  height: 33px;
  display: flex;
  align-items: center;
  padding: 1px 3px 0 5px;
  letter-spacing: -0.45px;
`;

const Field = styled.div<{ $w: number; $muted?: boolean }>`
  flex: none;
  width: ${p => p.$w}px;
  height: 26px;
  display: flex;
  align-items: center;
  background: #fff;
  border: 1px solid #7a7a7a;
  padding: 1px 0 0 4px;
  ${p => p.$muted && css`color: #7f7f7f; padding-left: 10px; gap: 8px; letter-spacing: -0.18px;`}
`;

const FieldText = styled.span`
  flex: 1;
`;

const StatusText = styled.span<{ $w: number }>`
  flex: none;
  width: ${p => p.$w}px;
  padding-top: 1px;
`;

const Spinner = styled.span`
  width: 18px;
  height: 21px;
  margin: -1px 1px 0 0;
  display: grid;
  grid-template-rows: 1fr 1fr;
  place-items: center;
  background: linear-gradient(#f0f0f0 9px, #adadad 9px 10px, #f0f0f0 10px);
  border: 1px solid #adadad;
  &::before { content: ''; border: 3.5px solid transparent; border-bottom: 4.5px solid #111; border-top: 0; }
  &::after { content: ''; border: 3.5px solid transparent; border-top: 4.5px solid #111; border-bottom: 0; }
`;

const Grip = styled.span`
  width: 11px;
  height: 11px;
  margin: 16px 0 0 auto;
  background: radial-gradient(circle at 1.5px 1.5px, #b2b2b2 1.4px, transparent 1.6px) 0 0 / 4px 4px;
  clip-path: polygon(100% 0, 100% 100%, 0 100%);
`;

/* ---------- menus ---------- */

const Popup = styled.div<{ $x: number; $y: number; $w: number }>`
  position: absolute;
  left: ${p => p.$x}px;
  top: ${p => p.$y}px;
  width: ${p => p.$w}px;
  padding: 4px 5px 1px 3px;
  background: #f0f0f0;
  border: 1px solid #bcbcbc;
  box-shadow: 3px 3px 3px rgba(0, 0, 0, 0.5);
`;

const Entry = styled.div<{ $on?: boolean }>`
  height: 28px;
  display: flex;
  align-items: center;
  padding: 0 12px 0 3px;
  background: ${p => (p.$on ? '#99c6f2' : 'transparent')};
`;

const EntryIcon = styled.span<{ $w: number }>`
  width: ${p => p.$w}px;
  flex: none;
`;

const EntryText = styled.span`
  flex: 1;
  letter-spacing: 0.04px;
`;

const SubArrow = styled.span`
  border: 5px solid transparent;
  border-left: 5.5px solid #000;
  border-right: 0;
  margin-top: -3px;
`;

/* ---------- elevation raster ---------- */

type Pt = [number, number];

const seeded = (seed: number) => () => {
  seed = (seed * 16807) % 2147483647;
  return seed / 2147483647;
};

const line = (pts: Pt[]) => {
  let d = `M${pts[0][0]} ${pts[0][1]}`;
  for (let i = 1; i < pts.length - 1; i++) {
    d += `Q${pts[i][0]} ${pts[i][1]} ${(pts[i][0] + pts[i + 1][0]) / 2} ${(pts[i][1] + pts[i + 1][1]) / 2}`;
  }
  const e = pts[pts.length - 1];
  return `${d}L${e[0]} ${e[1]}`;
};

type Stem = { w: number; spur: number; pts: Pt[] };

const RIDGES: Stem[] = [
  { w: 1, spur: 140, pts: [[385, 90], [365, 190], [320, 255], [280, 320], [270, 400], [280, 470], [268, 540], [250, 620], [252, 690]] },
  { w: 0.6, spur: 60, pts: [[200, 150], [260, 200], [320, 250]] },
  { w: 0.6, spur: 100, pts: [[500, 60], [560, 70], [600, 110], [590, 170], [555, 210], [570, 300], [600, 360], [630, 420]] },
  { w: 0.8, spur: 80, pts: [[590, 50], [680, 60], [760, 140]] },
  { w: 0.5, spur: 50, pts: [[280, 460], [340, 470], [390, 530]] },
  { w: 0.45, spur: 80, pts: [[60, 320], [130, 340], [220, 320], [280, 320]] },
  { w: 0.45, spur: 70, pts: [[390, 250], [440, 270], [450, 340]] },
  { w: 0.5, spur: 60, pts: [[270, 480], [200, 500], [120, 560]] },
  { w: 0.85, spur: 120, pts: [[130, 740], [170, 850], [180, 930], [160, 990], [160, 1060], [210, 1140], [210, 1220], [190, 1300]] },
  { w: 0.6, spur: 110, pts: [[50, 930], [150, 985], [250, 1005], [350, 1010], [430, 1050], [500, 1060]] },
  { w: 0.5, spur: 90, pts: [[200, 1200], [290, 1195], [370, 1220]] },
  { w: 0.55, spur: 100, pts: [[190, 1290], [120, 1370], [80, 1500]] },
  { w: 0.5, spur: 80, pts: [[180, 1300], [250, 1370], [290, 1430], [350, 1490]] },
  { w: 0.35, spur: 100, pts: [[250, 700], [340, 710], [440, 700], [520, 740], [580, 820]] },
  { w: 0.95, spur: 130, pts: [[1530, 800], [1460, 890], [1420, 980], [1380, 1050], [1290, 1110], [1190, 1180], [1150, 1240], [1140, 1320], [1110, 1400], [1060, 1460], [1025, 1550]] },
  { w: 0.35, spur: 80, pts: [[1140, 960], [1180, 930], [1220, 990], [1300, 1060], [1350, 1060]] },
  { w: 0.35, spur: 60, pts: [[1080, 1130], [1110, 1170], [1170, 1190]] },
  { w: 0.3, spur: 80, pts: [[1140, 1340], [1230, 1360], [1290, 1420]] },
];

const VALLEYS: Stem[] = [
  { w: 14, spur: 60, pts: [[430, 40], [400, 190], [375, 240], [400, 310], [430, 410], [500, 470], [540, 550], [580, 620], [650, 700], [720, 780]] },
  { w: 24, spur: 70, pts: [[220, 750], [260, 820], [350, 850], [470, 870], [550, 940], [600, 1000], [660, 1040]] },
  { w: 42, spur: 60, pts: [[740, 760], [700, 900], [690, 980], [650, 1050], [640, 1140], [580, 1220], [575, 1340], [560, 1430], [490, 1540]] },
  { w: 48, spur: 60, pts: [[1150, 690], [1050, 720], [960, 830], [880, 930], [800, 1060], [740, 1180], [720, 1300]] },
  { w: 90, spur: 60, pts: [[740, 720], [860, 790], [1020, 760]] },
  { w: 14, spur: 60, pts: [[690, 1010], [780, 1060], [870, 1045], [960, 1060], [1080, 1020]] },
  { w: 9, spur: 60, pts: [[230, 1060], [350, 1110], [450, 1160], [560, 1190]] },
  { w: 9, spur: 60, pts: [[280, 1290], [380, 1360], [470, 1370], [550, 1410]] },
  { w: 6, spur: 50, pts: [[1180, 710], [1230, 750], [1280, 830], [1290, 920], [1310, 990]] },
  { w: 6, spur: 60, pts: [[1260, 1250], [1330, 1330], [1400, 1400], [1530, 1470]] },
  { w: 8, spur: 50, pts: [[60, 600], [200, 585], [400, 610], [570, 600]] },
  { w: 5, spur: 40, pts: [[60, 500], [120, 440], [180, 430]] },
  { w: 5, spur: 40, pts: [[830, 1400], [890, 1380], [950, 1350]] },
  { w: 5, spur: 40, pts: [[500, 330], [525, 430], [530, 510]] },
  { w: 36, spur: 50, pts: [[490, 1470], [620, 1440], [760, 1500]] },
];

const branches = (stems: Stem[], step: number, seed: number) => {
  const rnd = seeded(seed);
  const out: { d: string; o: number; dark: boolean }[] = [];
  stems.forEach(r => {
    for (let i = 0; i < r.pts.length - 1; i++) {
      const [x0, y0] = r.pts[i];
      const [x1, y1] = r.pts[i + 1];
      const len = Math.hypot(x1 - x0, y1 - y0);
      const a = Math.atan2(y1 - y0, x1 - x0);
      for (let s = 0; s < len; s += step) {
        const side = rnd() > 0.5 ? 1 : -1;
        const ang = a + side * (0.9 + rnd() * 0.8);
        const l = r.spur * (0.4 + rnd() * 0.9);
        const x = x0 + ((x1 - x0) * s) / len;
        const y = y0 + ((y1 - y0) * s) / len;
        const bend = (rnd() - 0.5) * 0.9;
        const mx = x + Math.cos(ang) * l * 0.5;
        const my = y + Math.sin(ang) * l * 0.5;
        out.push({
          d: `M${x.toFixed(0)} ${y.toFixed(0)}Q${mx.toFixed(0)} ${my.toFixed(0)} ${(mx + Math.cos(ang + bend) * l * 0.5).toFixed(0)} ${(my + Math.sin(ang + bend) * l * 0.5).toFixed(0)}`,
          o: Math.min(r.w, 1) * (0.08 + rnd() * 0.16),
          dark: rnd() > 0.55,
        });
      }
    }
  });
  return out;
};

const SPURS = branches(RIDGES, 12, 4711);
const GULLIES = branches(VALLEYS, 26, 977);

const HAZE: [number, number, number, number, number][] = [
  [270, 350, 130, 220, 0.32], [590, 230, 130, 230, 0.34], [430, 380, 150, 200, 0.17], [150, 1000, 120, 260, 0.3],
  [330, 1020, 220, 120, 0.22], [400, 740, 230, 70, 0.3], [560, 830, 120, 130, 0.21], [150, 1340, 160, 220, 0.26],
  [370, 1240, 170, 110, 0.21], [1170, 1290, 150, 240, 0.28], [1400, 1050, 140, 210, 0.28], [1350, 1380, 190, 180, 0.2],
  [1180, 960, 160, 90, 0.17], [880, 1180, 100, 80, 0.11], [800, 920, 70, 110, 0.08], [100, 350, 110, 130, 0.13],
  [630, 500, 110, 170, 0.15], [820, 690, 160, 40, 0.06], [1100, 830, 130, 90, 0.08], [330, 1470, 150, 70, 0.16],
  [660, 1130, 60, 90, 0.07], [880, 1450, 130, 100, 0.05], [150, 580, 140, 100, 0.1], [1450, 750, 90, 80, 0.07],
];

const Raster = styled.svg`
  display: block;
  width: 547px;
  height: 533px;
`;

const Elevation = () => (
  <Raster viewBox="36 40 1477 1492" preserveAspectRatio="none" colorInterpolationFilters="sRGB">
    <defs>
      <filter id="haze" x="-50%" y="-50%" width="200%" height="200%"><feGaussianBlur stdDeviation="38" /></filter>
      <filter id="wide" filterUnits="userSpaceOnUse" x="-60" y="-60" width="1700" height="1700"><feGaussianBlur stdDeviation="22" /></filter>
      <filter id="fine" filterUnits="userSpaceOnUse" x="-60" y="-60" width="1700" height="1700"><feGaussianBlur stdDeviation="6" /></filter>
      <filter id="rough" filterUnits="userSpaceOnUse" x="-60" y="-60" width="1700" height="1700">
        <feTurbulence type="fractalNoise" baseFrequency="0.014" numOctaves="3" seed="8" result="n" />
        <feDisplacementMap in="SourceGraphic" in2="n" scale="46" xChannelSelector="R" yChannelSelector="G" />
      </filter>
      <filter id="grain" filterUnits="userSpaceOnUse" x="0" y="0" width="1560" height="1560">
        <feTurbulence type="fractalNoise" baseFrequency="0.016 0.01" numOctaves="4" seed="21" />
        <feColorMatrix values="0 0 0 0 0  0 0 0 0 0  0 0 0 0 0  2.2 0 0 0 -0.9" />
      </filter>
    </defs>
    <rect x="0" y="0" width="1560" height="1560" fill="#2a2a2a" />
    <g filter="url(#rough)">
      <rect x="-60" y="-60" width="1700" height="1700" fill="#2b2b2b" />
      <g filter="url(#haze)" fill="#fff">
        {HAZE.map(([x, y, rx, ry, o], i) => <ellipse key={i} cx={x} cy={y} rx={rx} ry={ry} opacity={o} />)}
        <ellipse cx="100" cy="130" rx="120" ry="110" fill="#000" opacity=".4" />
        <ellipse cx="780" cy="1350" rx="180" ry="170" fill="#000" opacity=".3" />
      </g>
      <g filter="url(#wide)" fill="none" stroke="#fff" strokeWidth="46">
        {RIDGES.map((r, i) => <path key={i} d={line(r.pts)} opacity={r.w * 0.52} />)}
      </g>
      <g filter="url(#wide)" fill="none" stroke="#0c0c0c" strokeLinecap="round">
        {VALLEYS.map((v, i) => <path key={i} d={line(v.pts)} strokeWidth={v.w * 2} opacity={Math.min(0.85, 0.45 + v.w / 70)} />)}
      </g>
      <g filter="url(#fine)" fill="none" strokeLinecap="round">
        {SPURS.map((s, i) => <path key={i} d={s.d} stroke={s.dark ? '#333' : '#fff'} strokeWidth="9" opacity={s.o * (s.dark ? 1.7 : 1.1)} />)}
        {GULLIES.map((s, i) => <path key={i} d={s.d} stroke="#111" strokeWidth="6" opacity={s.o * 1.2} />)}
      </g>
      <g filter="url(#fine)" fill="none" stroke="#fff" strokeWidth="13">
        {RIDGES.map((r, i) => <path key={i} d={line(r.pts)} opacity={r.w * 0.34} />)}
      </g>
      <g filter="url(#fine)" fill="none" stroke="#0e0e0e" strokeLinecap="round">
        {VALLEYS.map((v, i) => <path key={i} d={line(v.pts)} strokeWidth={v.w * 0.8} opacity=".55" />)}
      </g>
    </g>
    <rect x="0" y="0" width="1560" height="1560" filter="url(#grain)" opacity=".25" />
    <path d="M38 40V1530H1513" fill="none" stroke="#000" strokeWidth="7" />
    <path d="M36 42H1512V1532" fill="none" stroke="#222" strokeWidth="4" />
  </Raster>
);

/* ---------- window behind ---------- */

const Behind = styled.div`
  height: 10px;
  display: flex;
  background: linear-gradient(#bdbdbd, #e4e4e4);
`;

const BehindPane = styled.div<{ $w: number; $bg?: string }>`
  width: ${p => p.$w}px;
  flex: none;
  border-right: 1px solid #777;
  background: ${p => p.$bg ?? 'none'};
`;

/* ---------- data ---------- */

const MENUS: [string, number][] = [
  ['Project', 67], ['Edit', 46], ['View', 52], ['Layer', 56], ['Settings', 74], ['Plugins', 70], ['Vector', 62],
  ['Raster', 61], ['Database', 82], ['Web', 51], ['MMQGIS', 81], ['Processing', 93], ['Help', 50],
];

const BROWSER: [string, string, boolean][] = [
  ['star', 'Favorites', false], ['home', 'Home', true], ['dir', 'C:\\', true], ['dir', 'D:\\', true],
  ['box', 'GeoPackage', false], ['feather', 'SpatiaLite', false], ['elephant', 'PostGIS', true],
  ['mssql', 'MSSQL', true], ['oracle', 'Oracle', false], ['oracleTop', '', false],
];

const RASTER_MENU: [string, string, boolean][] = [
  ['rasterCalc', 'Raster Calculator...', false], ['', 'Align Rasters...', false], ['georef', 'Georeferencer...', false],
  ['', 'Analysis', true], ['', 'Projections', true], ['', 'Miscellaneous', true], ['', 'Extraction', true], ['', 'Conversion', true],
];

const ANALYSIS_MENU: [string, string][] = [
  ['gdal', 'Aspect...'], ['gdal', 'Fill nodata...'], ['grid', 'Grid (Moving Average)...'], ['grid', 'Grid (Data Metrics)...'],
  ['grid', 'Grid (Inverse Distance to a Power)...'], ['grid', 'Grid (Nearest Neighbor)...'], ['gdal', 'Hillshade...'],
  ['nearBlack', 'Near Black...'], ['proximity', 'Proximity (Raster Distance)...'], ['gdal', 'Roughness...'], ['sieve', 'Sieve...'],
  ['gdal', 'Slope...'], ['gdal', 'Topographic Position Index (TPI)...'], ['gdal', 'Terrain Ruggedness Index (TRI)...'],
];

const DockControls = () => (
  <>
    <Svg viewBox="0 0 18 18" $s={17}>
      <path d="M5.500 6V1.500h11V12H12" fill="none" stroke="#333" strokeWidth="1.800" />
      <path d="M5 2.500h12" stroke="#333" strokeWidth="3.500" />
      <rect x="1" y="7" width="11" height="10" fill="#dadada" stroke="#333" strokeWidth="1.800" />
      <path d="M0 8.500h13" stroke="#333" strokeWidth="3.500" />
    </Svg>
    <Svg viewBox="0 0 16 16" $s={17}><path d="M1.500 1.500l13 13M14.500 1.500l-13 13" stroke="#333" strokeWidth="3.300" /></Svg>
  </>
);

export default function App() {
  return (
    <Desktop>
      <GlobalStyle />
      <Window>
        <TitleBar>
          <Icon name="logo" size={20} />
          <Title>*Untitled Project - QGIS</Title>
          <WindowControls viewBox="0 0 130 14" fill="none" stroke="#000" strokeWidth="1.300">
            <path d="M1 7.500h13M58.500 1h12v12h-12zM117 1l12.500 12.500M129.500 1L117 13.500" />
          </WindowControls>
        </TitleBar>
        <MenuBar>
          {MENUS.map(([label, w]) => <MenuBarItem key={label} $w={w} $active={label === 'Raster'}>{label}</MenuBarItem>)}
        </MenuBar>

        <ToolRow $h={43}>
          <ToolGroup $w={291}><Handle /><Tools list={['newFile', 'folder', 'save', 'saveAs', 'newLayout', 'layoutMgr', 'style']} /></ToolGroup>
          <ToolGroup $w={567}><Handle /><Gap $w={1} /><Tools list={['hand', 'pan', 'zoomIn', 197, 'zoomLast', '-zoomNext', 'mapView', 'bookmarkNew', 'bookmarks', 'refresh']} /></ToolGroup>
          <ToolGroup $open><Handle /><Tools active="identify" list={['identify', '-action', 'v', '-select', 'v', '-form', 'v', 'deselect', '-table', '-abacus', 'gear', 'sigma', 'measure', 'V', 'tip', 'textNote', 'V']} /></ToolGroup>
        </ToolRow>
        <ToolRow $h={43}>
          <ToolGroup $w={239}><Handle /><Tools list={['dataSource', 'geopackage', 'newShape', 'spatialite', 'chip']} /></ToolGroup>
          <ToolGroup $w={964}><Handle /><Tools list={['-abc', '-diagram', 'pinLabelOn', '-pinLabel', '-pinLabel', 192.5, 'globePlus', 'globeSearch', 'globeFind']} /></ToolGroup>
          <ToolGroup $w={252}><Handle /><Gap $w={1} /><Tools list={['python', 'shapes', 'prevInter', 'prevClip', 'binoculars', 'hexagon']} /></ToolGroup>
          <ToolGroup $w={55}><Handle /><Tools list={['helpBook']} /></ToolGroup>
          <ToolGroup $open><Handle /></ToolGroup>
        </ToolRow>
        <ToolRow $h={44} $edge>
          <ToolGroup $open><Handle /><Tools list={['-pencils', '-pencil', '-saveEdits', '-points', '-vertex', 'v', '-editTable', '-trash', '-scissors', '-copy', '-paste', 545, '-vRefresh', '-cutters', '-cutters', '-merge', '-align', '-rotate', 'v']} /></ToolGroup>
        </ToolRow>
        <ToolRow $h={43}>
          <ToolGroup $w={94}><Handle /><Tools list={['osm', 'osmEdit']} /></ToolGroup>
          <ToolGroup $w={55}><Handle /><Tools list={['gpx']} /></ToolGroup>
          <ToolGroup $w={54}><Handle /><Tools list={['rectHand']} /></ToolGroup>
          <ToolGroup $open><Handle /><Tools list={['docs', 'pin', 'mag', 'magDots', 'meshGlobe', '-cross']} /></ToolGroup>
        </ToolRow>

        <Workspace>
          <LeftDock>
            <DockHeader><DockTitle>Browser</DockTitle><DockControls /></DockHeader>
            <DockTools $gap={11}>
              {['newRect', 'refresh', 'filter', 'collapse', 'info'].map(n => <Icon key={n} name={n} size={18.5} />)}
            </DockTools>
            <BrowserFrame $h={261}>
              <TreeList>
                {BROWSER.map(([icon, label, open], i) => (
                  <TreeRow key={i}>
                    <Twist>{open && <Chevron $dir="right" $c="#999" />}</Twist>
                    <Icon name={icon} size={20} />
                    <TreeText>{label}</TreeText>
                  </TreeRow>
                ))}
              </TreeList>
              <VScroll><Chevron $dir="up" /><VThumb /><Chevron $dir="down" /></VScroll>
              <HScroll><Chevron $dir="left" /><HThumb /><Chevron $dir="right" /></HScroll>
            </BrowserFrame>
            <DockHeader><DockTitle>Layers</DockTitle><DockControls /></DockHeader>
            <DockTools $gap={10.7} $pad={7}>
              {['brush', 'groupAdd', 'eye', 'filter'].map(n => <Icon key={n} name={n} size={18.5} />)}
              <Icon name="epsilon" size={20} off />
              <Drop $w={4} />
              {['expand', 'collapse', 'removeLayer'].map(n => <Icon key={n} name={n} size={18.5} />)}
            </DockTools>
            <Frame $h={316}>
              <LayerRow>
                <Twist><Chevron $dir="down" /></Twist>
                <CheckBox $s={17} $checked />
                <Gap $w={9} />
                <Icon name="raster" size={17} />
                <LayerName>elevation</LayerName>
              </LayerRow>
              <LegendRow><Swatch $c="#000" />134.525</LegendRow>
              <LegendRow><Swatch $c="#fff" />1333.91</LegendRow>
            </Frame>
          </LeftDock>

          <MapCanvas><Elevation /></MapCanvas>

          <RightDock>
            <DockHeader><DockTitle>Identify Results</DockTitle><DockControls /></DockHeader>
            <DockTools $gap={9.4} $pad={7}>
              <Icon name="formView" size={18.5} off />
              <Divider />
              {['expand', 'collapse', 'expandNew'].map(n => <Icon key={n} name={n} size={19} />)}
              <Divider />
              <Icon name="deselect" size={18.5} />
              <Divider />
              <Icon name="copy" size={16.5} off />
              <Icon name="print" size={18.5} off />
              <Icon name="identifySelect" size={20} />
              <Drop $w={6} $c="#111" />
            </DockTools>
            <Frame $h={569}>
              <ResultHead><HeadCell $pad={5}>Feature</HeadCell><ValueCell>Value</ValueCell></ResultHead>
              <ResultRow><FeatureCell $pad={8}><Twist><Chevron $dir="down" /></Twist>0</FeatureCell><ValueCell>elevation</ValueCell></ResultRow>
              <ResultRow $bg="#cfcfcf" $from={51}><FeatureCell $pad={34}><Twist><Chevron $dir="down" /></Twist>elevation</FeatureCell></ResultRow>
              <ResultRow><FeatureCell $pad={81}>Band 1: e...</FeatureCell><ValueCell>560.5691</ValueCell></ResultRow>
              <ResultRow $bg="#f5f5f5"><FeatureCell $pad={59}><Twist><Chevron $dir="right" $c="#999" /></Twist>(Derived)</FeatureCell></ResultRow>
            </Frame>
            <OptionRow $top={7}>
              <OptionLabel $w={42}>Mode</OptionLabel>
              <Select $w={173}>Current layer<Chevron $dir="down" $w={1.3} $c="#444" /></Select>
              <Auto><CheckBox $s={17} />Auto open form</Auto>
            </OptionRow>
            <OptionRow $top={11}>
              <OptionLabel $w={37}>View</OptionLabel>
              <Select $w={88}>Tree<Chevron $dir="down" $w={1.3} $c="#444" /></Select>
              <HelpButton>Help</HelpButton>
            </OptionRow>
          </RightDock>
        </Workspace>

        <StatusBar>
          <Field $w={254} $muted><Icon name="search" size={17} />Type to locate (Ctrl+K)</Field>
          <Gap $w={9} />
          <StatusText $w={400}>No features at this position found.</StatusText>
          <StatusText $w={72}>Coordinate</StatusText>
          <Field $w={109}>477795,235217</Field>
          <Gap $w={4} />
          <Icon name="gps" size={19} />
          <Gap $w={17} />
          <StatusText $w={36}>Scale</StatusText>
          <Field $w={99}><FieldText>1:209869</FieldText><Chevron $dir="down" $w={1.3} /><Gap $w={6} /></Field>
          <Gap $w={14} />
          <Icon name="lock" size={17} />
          <Gap $w={9} />
          <StatusText $w={61}>Magnifier</StatusText>
          <Field $w={104}><FieldText>100%</FieldText><Spinner /></Field>
          <Gap $w={10} />
          <StatusText $w={65}>Rotation</StatusText>
          <Field $w={102}><FieldText>0.0 °</FieldText><Spinner /></Field>
          <Gap $w={8} />
          <CheckBox $s={16} $checked />
          <Gap $w={5} />
          <StatusText $w={68}>Render</StatusText>
          <Icon name="crs" size={19} />
          <Gap $w={4} />
          <StatusText $w={89}>EPSG:2852</StatusText>
          <Icon name="chat" size={20} />
          <Grip />
        </StatusBar>

        <Popup $x={427} $y={64} $w={218}>
          {RASTER_MENU.map(([icon, label, sub]) => (
            <Entry key={label} $on={label === 'Analysis'}>
              <EntryIcon $w={37.5}>{icon && <Icon name={icon} size={20} />}</EntryIcon>
              <EntryText>{label}</EntryText>
              {sub && <SubArrow />}
            </Entry>
          ))}
        </Popup>
        <Popup $x={637} $y={148} $w={331}>
          {ANALYSIS_MENU.map(([icon, label]) => (
            <Entry key={label} $on={label === 'Hillshade...'}>
              <EntryIcon $w={37.5}><Icon name={icon} size={20} /></EntryIcon>
              <EntryText>{label}</EntryText>
            </Entry>
          ))}
        </Popup>
      </Window>
      <Behind>
        <BehindPane $w={134} />
        <BehindPane $w={6} />
        <BehindPane $w={123} />
        <BehindPane $w={546} $bg="linear-gradient(90deg, #2c2c2c, #4c4c4c 8%, #555 16%, #2b2b2b 24%, #0c0c0c 35%, #151515 50%, #333 60%, #7a7a7a 71%, #4a4a4a 80%, #2c2c2c)" />
        <BehindPane $w={118} />
        <BehindPane $w={7} />
        <BehindPane $w={607} />
        <BehindPane $w={8} $bg="#b8c8dc" />
        <BehindPane $w={24} />
      </Behind>
    </Desktop>
  );
}
